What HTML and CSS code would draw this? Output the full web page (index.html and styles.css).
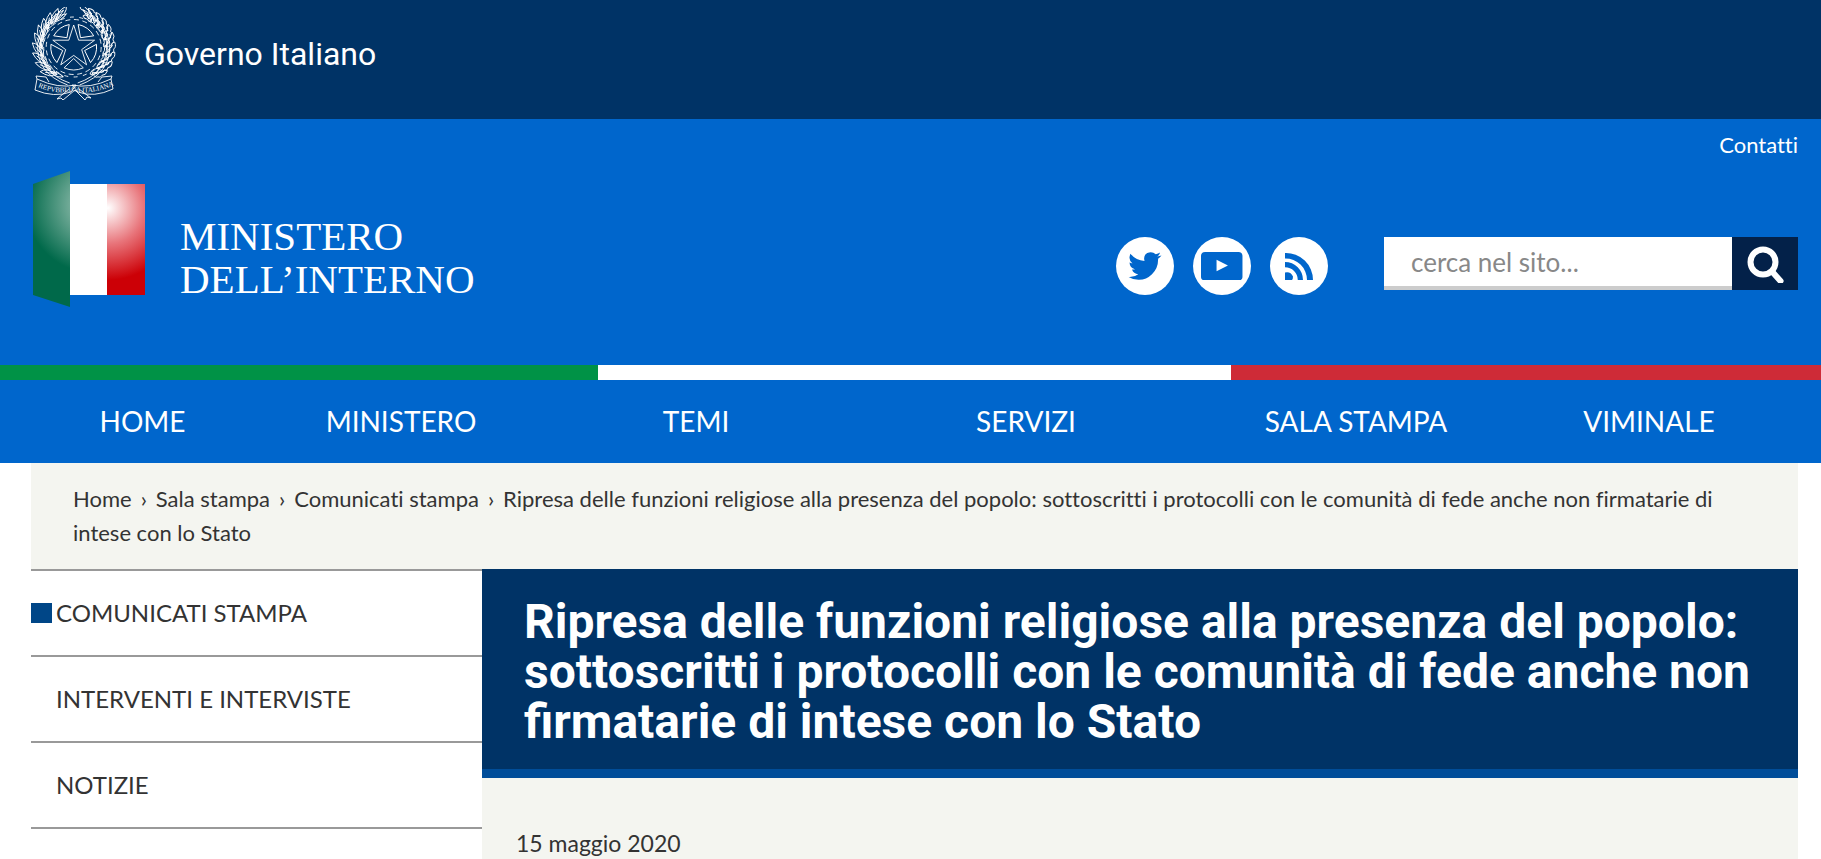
FILE: index.html
```html
<!DOCTYPE html>
<html lang="it">
<head>
<meta charset="utf-8">
<meta name="viewport" content="width=device-width, initial-scale=1">
<title>Ministero dell’Interno</title>
<link rel="stylesheet" href="styles.css">
</head>
<body>
<div class="govbar">
  <svg class="emblem" viewBox="0 0 84 93" aria-hidden="true">
    <defs>
      <path id="sector" d="M0-11.5 9.6-20.8A23 23 0 0 0-9.6-20.8Z"/>
      <path id="leaf" d="M-7-31Q-5-39 7-41Q6-34-7-31L3-38"/>
      <path id="leaf-in" d="M-6-31Q0-36 8-33Q1-29-6-31"/>
      <path id="oak" d="M7-31Q4-34 4-36Q0-35 0-38Q-4-37-5-41Q0-43 2-40Q5-41 6-38Q9-37 7-31L-2-39"/>
      <path id="oak-in" d="M6-31Q3-29 1-31Q-2-30-4-32Q-3-35 0-34Q3-36 6-31"/>
      <path id="ribbon-line" d="M6 80Q23 88 41 84Q59 88 80 79"/>
    </defs>
    <g class="emblem-lines" transform="translate(41.7 40)">
      <path d="M0-22 4.9-6.8H20.9L8 2.6 12.9 17.8 0 8.4-12.9 17.8-8 2.6-20.9-6.8H-4.9Z"/>
      <use href="#sector" transform="rotate(36)"/><use href="#sector" transform="rotate(108)"/><use href="#sector" transform="rotate(180)"/><use href="#sector" transform="rotate(252)"/><use href="#sector" transform="rotate(324)"/>
      <circle r="27.500" class="gear-low"/>
      <circle r="30" class="gear-high"/>
      <path d="M-4 36Q-34 26-33-4Q-31-24-14-33M4 36Q34 26 33-4Q31-24 14-33M-6 38Q-38 26-36-4Q-32-26-10-37M6 38Q38 26 36-4Q32-26 10-37"/>
      <use href="#leaf" transform="rotate(-20)"/><use href="#leaf" transform="rotate(-32)"/><use href="#leaf" transform="rotate(-44)"/><use href="#leaf" transform="rotate(-56)"/><use href="#leaf" transform="rotate(-68)"/><use href="#leaf" transform="rotate(-80)"/><use href="#leaf" transform="rotate(-94)"/><use href="#leaf" transform="rotate(-108)"/><use href="#leaf" transform="rotate(-122)"/><use href="#leaf" transform="rotate(-136)"/>
      <use href="#leaf-in" transform="rotate(-26)"/><use href="#leaf-in" transform="rotate(-44)"/><use href="#leaf-in" transform="rotate(-62)"/><use href="#leaf-in" transform="rotate(-80)"/><use href="#leaf-in" transform="rotate(-98)"/><use href="#leaf-in" transform="rotate(-116)"/><use href="#leaf-in" transform="rotate(-134)"/><use href="#leaf-in" transform="rotate(-150)"/>
      <use href="#oak" transform="rotate(16)"/><use href="#oak" transform="rotate(28)"/><use href="#oak" transform="rotate(40)"/><use href="#oak" transform="rotate(52)"/><use href="#oak" transform="rotate(64)"/><use href="#oak" transform="rotate(76)"/><use href="#oak" transform="rotate(90)"/><use href="#oak" transform="rotate(104)"/><use href="#oak" transform="rotate(118)"/><use href="#oak" transform="rotate(132)"/>
      <use href="#oak-in" transform="rotate(24)"/><use href="#oak-in" transform="rotate(38)"/><use href="#oak-in" transform="rotate(52)"/><use href="#oak-in" transform="rotate(66)"/><use href="#oak-in" transform="rotate(80)"/><use href="#oak-in" transform="rotate(94)"/><use href="#oak-in" transform="rotate(108)"/><use href="#oak-in" transform="rotate(122)"/><use href="#oak-in" transform="rotate(138)"/>
    </g>
    <g class="emblem-lines">
      <path d="M14 70 4 69 5 72 3 83Q22 91 39 85L44 78Q26 82 5 72M70 70 80 69 79 72 81 82Q62 91 46 85L40 78Q58 82 79 72M14 70 17 75M70 70 66 75M37 82 25 92 29 91 31 93 43 83 53 93 55 90 59 91 47 82"/>
    </g>
    <text class="ribbon-text"><textPath href="#ribbon-line">REPVBBLICA ITALIANA</textPath></text>
  </svg>
  <a class="gov-name" href="#">Governo Italiano</a>
</div>

<header class="header">
  <div class="utility"><a href="#">Contatti</a></div>
  <div class="masthead">
    <a class="brand" href="#">
      <svg class="flag" viewBox="0 0 113 136" aria-hidden="true">
        <defs>
          <radialGradient id="green" gradientUnits="userSpaceOnUse" cx="62" cy="34" r="68"><stop offset="0" stop-color="#a4c8ba"/><stop offset=".35" stop-color="#72ab98"/><stop offset="1" stop-color="#00694a"/></radialGradient>
          <radialGradient id="red" gradientUnits="userSpaceOnUse" cx="76" cy="37" r="72"><stop offset="0" stop-color="#fff"/><stop offset=".5" stop-color="#e8747a"/><stop offset="1" stop-color="#cc0006"/></radialGradient>
        </defs>
        <path d="M1 13 38 0V136L1 124Z" fill="url(#green)"/>
        <path d="M38 13H76V124H38Z" fill="#fff"/>
        <path d="M75 13H113V124H75Z" fill="url(#red)"/>
      </svg>
      <span class="brand-name">MINISTERO<br>DELL’INTERNO</span>
    </a>
    <div class="tools">
      <div class="social">
        <a href="#" aria-label="Twitter"><svg viewBox="0 0 34 28"><path d="M33.500 3.600q-1.500 2-3.400 3.200Q30.400 16 24 22.300 18.200 28 10.500 27.800 5 27.800.6 25q5.600.4 9.700-2.800-4.800-.4-6.300-4.700 1.600.3 3-.2Q1.800 16 1.500 10.600q1.400.8 3 .8Q-.3 7.600 2.500 1.800q5.400 6.600 14 7.100Q15 3.500 19.300 1q4.700-2.200 8.500 1.300 2.300-.5 4.300-1.700-.8 2.500-2.900 3.900 2.300-.2 4.300-.9Z"/></svg></a>
        <a href="#" aria-label="YouTube"><svg viewBox="0 0 40 27"><path fill-rule="evenodd" d="M4 0H36Q40 0 40 4V24Q40 27 37 27H3Q0 27 0 24V4Q0 0 4 0ZM15 7.500V18.500L26 13Z"/></svg></a>
        <a href="#" aria-label="RSS"><svg viewBox="0 0 28 28"><path d="M0 20.500A7 7 0 0 1 8 24.500Q8 27 7 28H0ZM0 10A18 18 0 0 1 18 28H12.800A12.800 12.800 0 0 0 0 15.200ZM0 1A27 27 0 0 1 28 28H22A21.500 21.500 0 0 0 0 6.500Z"/></svg></a>
      </div>
      <form class="search">
        <input type="text" placeholder="cerca nel sito..." aria-label="cerca nel sito">
        <button type="submit" aria-label="Cerca"><svg viewBox="0 0 38 38"><circle cx="17" cy="17" r="12.500"/><path d="M26.500 27 34.500 36"/></svg></button>
      </form>
    </div>
  </div>
</header>
<div class="tricolore"><span></span><span></span><span></span></div>
<nav class="nav" aria-label="Principale">
  <a href="#">HOME</a><a href="#">MINISTERO</a><a href="#">TEMI</a><a href="#">SERVIZI</a><a href="#">SALA STAMPA</a><a href="#">VIMINALE</a>
</nav>

<div class="page">
  <nav class="breadcrumb" aria-label="Percorso"><a href="#">Home</a><span class="sep">›</span><a href="#">Sala stampa</a><span class="sep">›</span><a href="#">Comunicati stampa</a><span class="sep">›</span>Ripresa delle funzioni religiose alla presenza del popolo: sottoscritti i protocolli con le comunità di fede anche non firmatarie di intese con lo Stato</nav>
  <div class="columns">
    <ul class="side">
      <li><a class="current" href="#">COMUNICATI STAMPA</a></li>
      <li><a href="#">INTERVENTI E INTERVISTE</a></li>
      <li><a href="#">NOTIZIE</a></li>
    </ul>
    <main class="article">
      <h1>Ripresa delle funzioni religiose alla presenza del popolo: sottoscritti i protocolli con le comunità di fede anche non firmatarie di intese con lo Stato</h1>
      <p class="date">15 maggio 2020</p>
    </main>
  </div>
</div>
</body>
</html>
```
FILE: styles.css
```css
* { box-sizing: border-box; }
body { display: flex; flex-direction: column; min-height: 100vh; margin: 0; background: #fff; color: #333; font-family: Lato, sans-serif; font-size: 22px; font-variant-ligatures: none; }
a { color: inherit; text-decoration: none; }

.govbar { display: flex; align-items: center; gap: 28px; padding: 7px 23px 19px 32px; background: #003366; color: #fff; }
.emblem { width: 84px; height: 93px; }
.emblem-lines { fill: none; stroke: #fff; stroke-width: .9; }
.gear-low { stroke-dasharray: 5 3.640; }
.gear-high { stroke-dasharray: 4 5.425; stroke-dashoffset: 4; }
.ribbon-text { fill: #fff; font-family: "Liberation Serif", serif; font-size: 7px; }
.gov-name { font-family: Roboto, sans-serif; font-size: 32px; line-height: 40px; }

.header { padding: 13px 23px 58px 32px; background: #0066cc; color: #fff; }
.utility { text-align: right; line-height: 26px; }
.masthead { display: flex; justify-content: space-between; align-items: flex-start; margin-top: 13px; }
.brand { display: flex; align-items: flex-end; gap: 35px; }
.flag { width: 113px; height: 136px; }
.brand-name { padding-bottom: 6px; font-family: "Liberation Serif", serif; font-size: 41px; line-height: 43px; }
.tools { display: flex; align-items: flex-start; gap: 56px; padding-top: 66px; }
.social { display: flex; gap: 19px; }
.social a { display: flex; align-items: center; justify-content: center; width: 58px; height: 58px; border-radius: 50%; background: #fff; }
.social svg { height: 28px; fill: #0066cc; }
.search { display: flex; height: 53px; }
.search input { width: 348px; padding: 0 27px; border: 0; border-bottom: 4px solid #ccc; border-radius: 0; background: #fff; color: #333; font: 26px Lato, sans-serif; }
.search input::placeholder { color: #888; opacity: 1; }
.search button { display: flex; align-items: center; justify-content: center; width: 66px; padding: 0; border: 0; background: #032149; }
.search svg { width: 38px; height: 38px; fill: none; stroke: #fff; stroke-width: 6; stroke-linecap: round; }

.tricolore { display: grid; grid-template-columns: 598fr 633fr 590fr; height: 15px; background: #fff; }
.tricolore span:first-child { background: #009246; }
.tricolore span:last-child { background: #ce2b37; }

.nav { display: grid; grid-template-columns: 223fr 294fr 296fr 364fr 296fr 290fr; padding: 0 27px 0 31px; background: #0066cc; color: #fff; font-size: 28px; line-height: 83px; text-align: center; }

.page { flex: 1; display: flex; flex-direction: column; margin: 0 23px 0 31px; }
.breadcrumb { padding: 19px 40px 19px 42px; background: #f4f5f0; line-height: 34px; }
.sep { margin: 0 9px; }
.columns { flex: 1; display: grid; grid-template-columns: 451fr 1316fr; }
.side { margin: 0; padding: 0; border-top: 2px solid #999; list-style: none; align-self: start; }
.side li { border-bottom: 2px solid #999; }
.side a { display: flex; align-items: center; padding-left: 25px; font-size: 24px; line-height: 84px; }
.side .current { gap: 4px; padding-left: 0; }
.side .current::before { content: ""; width: 21px; height: 20px; background: #004687; }
.article { background: #f4f5f0; }
.article h1 { margin: 0; padding: 28px 42px 22px; border-bottom: 9px solid #004d99; background: #003366; color: #fff; font: bold 48px/50px Roboto, sans-serif; }
.date { margin: 0; padding: 50px 34px 0; font-size: 23px; line-height: 30px; }
```
